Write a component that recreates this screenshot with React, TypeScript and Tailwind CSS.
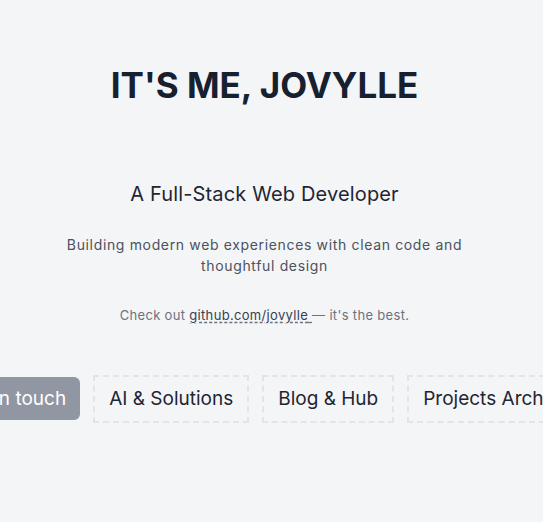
const links = [
  { label: 'AI & Solutions', href: '#ai' },
  { label: 'Blog & Hub', href: '#blog' },
  { label: 'Projects Archive', href: '#projects' },
];

export default function App() {
  return (
    <main
      className="min-h-screen w-full overflow-hidden bg-[#f4f5f7] text-center"
      style={{ fontFamily: 'Inter, "Noto Sans", sans-serif' }}
    >
      {/* right padding keeps the same centre as the original page with its scrollbar */}
      <section className="flex flex-col items-center pt-[63px] pr-[14px]">
        <h1 className="text-[35px] font-bold tracking-normal text-[#17202f] leading-[44px]">
          IT'S ME, JOVYLLE
        </h1>

        <h2 className="mt-[73px] text-xl tracking-[0.15px] text-[#1f2633] leading-7">
          A Full-Stack Web Developer
        </h2>

        <p className="mt-[26px] max-w-[430px] text-sm leading-[21px] tracking-[0.65px] text-[#4b5260]">
          Building modern web experiences with clean code and thoughtful design
        </p>

        <p className="mt-[30px] text-[13px] tracking-wide text-[#6b7280]">
          Check out{' '}
          <a
            href="https://github.com/jovylle"
            className="text-[#374151] underline decoration-dashed decoration-[#6b7280] underline-offset-2"
          >
            github.com/jovylle{' '}
          </a>
          — it's the best.
        </p>

        <div className="mt-[49px] flex w-full justify-center">
          <div className="flex shrink-0 items-center gap-[13px]">
            <a
              href="#contact"
              className="rounded-md bg-[#9196a3] px-[14px] py-[8px] text-[19px] leading-[27px] text-white"
            >
              Get in touch
            </a>
            {links.map((link) => (
              <a
                key={link.label}
                href={link.href}
                className="border-2 border-dashed border-[#e2e4e8] px-[14px] py-[9px] text-[19px] leading-[26px] text-[#1f2633]"
              >
                {link.label}
              </a>
            ))}
          </div>
        </div>
      </section>
    </main>
  );
}
